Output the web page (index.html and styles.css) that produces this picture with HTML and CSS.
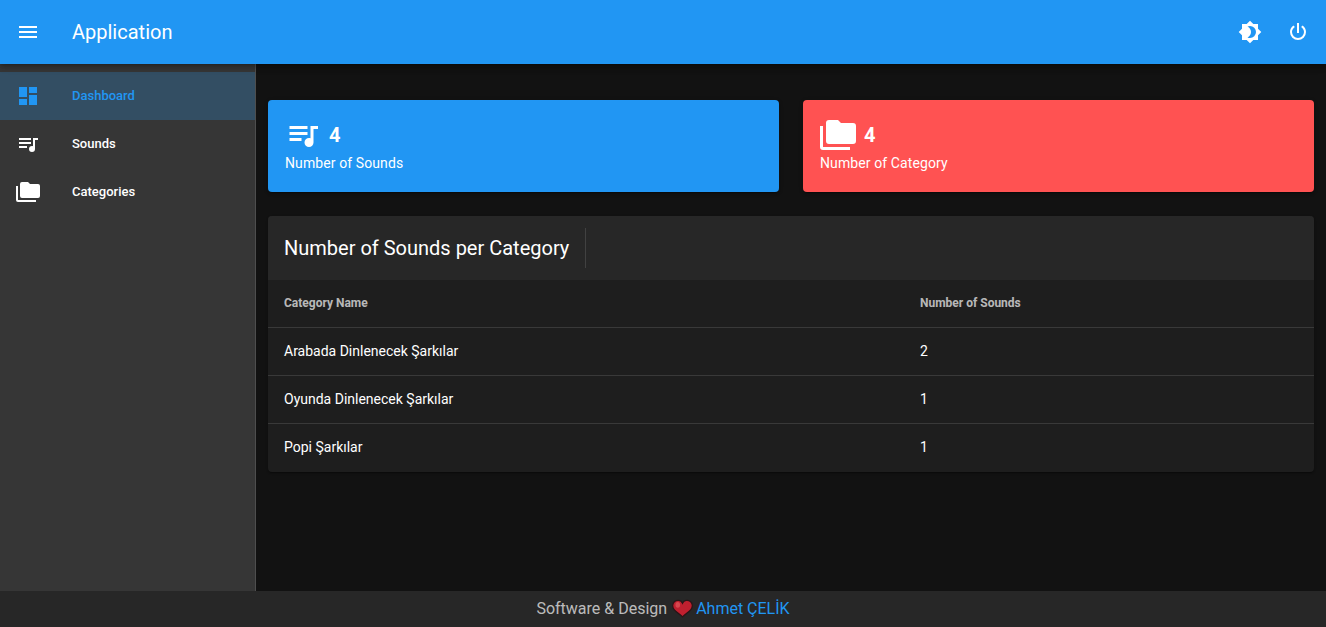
FILE: index.html
```html
<!DOCTYPE html>
<html lang="en">
<head>
    <meta charset="UTF-8">
    <meta name="viewport" content="width=device-width, initial-scale=1.0">
    <title>Application</title>
    <link rel="stylesheet" href="styles.css">
</head>
<body>
    <header class="app-bar">
        <button class="icon-btn nav-toggle">
            <svg class="icon" viewBox="0 0 24 24"><path d="M3,6H21V8H3V6M3,11H21V13H3V11M3,16H21V18H3V16Z"/></svg>
        </button>
        <div class="app-title">Application</div>
        <div class="spacer"></div>
        <button class="icon-btn">
            <svg class="icon" viewBox="0 0 24 24"><path d="M12,18C11.11,18 10.26,17.8 9.5,17.45C11.56,16.5 13,14.42 13,12C13,9.58 11.56,7.5 9.5,6.55C10.26,6.2 11.11,6 12,6A6,6 0 0,1 18,12A6,6 0 0,1 12,18M20,8.69V4H15.31L12,0.69L8.69,4H4V8.69L0.69,12L4,15.31V20H8.69L12,23.31L15.31,20H20V15.31L23.31,12L20,8.69Z"/></svg>
        </button>
        <button class="icon-btn">
            <svg class="icon" viewBox="0 0 24 24"><path d="M16.56,5.44L15.11,6.89C16.84,7.94 18,9.83 18,12A6,6 0 0,1 12,18A6,6 0 0,1 6,12C6,9.83 7.16,7.94 8.88,6.88L7.44,5.44C5.36,6.88 4,9.28 4,12A8,8 0 0,0 12,20A8,8 0 0,0 20,12C20,9.28 18.64,6.88 16.56,5.44M13,3H11V13H13"/></svg>
        </button>
    </header>

    <div class="layout">
        <nav class="sidebar">
            <a class="nav-item active">
                <svg class="icon" viewBox="0 0 24 24"><path d="M13,3V9H21V3M13,21H21V11H13M3,21H11V15H3M3,13H11V3H3V13Z"/></svg>
                <span class="nav-label">Dashboard</span>
            </a>
            <a class="nav-item">
                <svg class="icon" viewBox="0 0 24 24"><path d="M15,6V8H3V6H15M15,10V12H3V10H15M3,16V14H11V16H3M17,6H22V8H19V17A3,3 0 0,1 16,20A3,3 0 0,1 13,17A3,3 0 0,1 16,14C16.35,14 16.69,14.07 17,14.18V6Z"/></svg>
                <span class="nav-label">Sounds</span>
            </a>
            <a class="nav-item">
                <svg class="icon" viewBox="0 0 24 24"><path d="M22,4H14L12,2H6A2,2 0 0,0 4,4V16A2,2 0 0,0 6,18H22A2,2 0 0,0 24,16V6A2,2 0 0,0 22,4M2,6H0V20A2,2 0 0,0 2,22H20V20H2V6Z"/></svg>
                <span class="nav-label">Categories</span>
            </a>
        </nav>

        <main class="content">
            <div class="stats">
                <div class="stat-card blue">
                    <div class="stat-top">
                        <svg class="icon-lg" viewBox="0 0 24 24"><path d="M15,6V8H3V6H15M15,10V12H3V10H15M3,16V14H11V16H3M17,6H22V8H19V17A3,3 0 0,1 16,20A3,3 0 0,1 13,17A3,3 0 0,1 16,14C16.35,14 16.69,14.07 17,14.18V6Z"/></svg>
                        <span class="stat-value">4</span>
                    </div>
                    <div class="stat-label">Number of Sounds</div>
                </div>
                <div class="stat-card red">
                    <div class="stat-top">
                        <svg class="icon-lg" viewBox="0 0 24 24"><path d="M22,4H14L12,2H6A2,2 0 0,0 4,4V16A2,2 0 0,0 6,18H22A2,2 0 0,0 24,16V6A2,2 0 0,0 22,4M2,6H0V20A2,2 0 0,0 2,22H20V20H2V6Z"/></svg>
                        <span class="stat-value">4</span>
                    </div>
                    <div class="stat-label">Number of Category</div>
                </div>
            </div>

            <section class="table-card">
                <div class="toolbar">
                    <div class="toolbar-title">Number of Sounds per Category</div>
                    <div class="divider"></div>
                </div>
                <table>
                    <thead>
                        <tr>
                            <th>Category Name</th>
                            <th>Number of Sounds</th>
                        </tr>
                    </thead>
                    <tbody>
                        <tr>
                            <td>Arabada Dinlenecek Şarkılar</td>
                            <td>2</td>
                        </tr>
                        <tr>
                            <td>Oyunda Dinlenecek Şarkılar</td>
                            <td>1</td>
                        </tr>
                        <tr>
                            <td>Popi Şarkılar</td>
                            <td>1</td>
                        </tr>
                    </tbody>
                </table>
            </section>
        </main>
    </div>

    <footer class="footer">
        <span>Software &amp; Design</span>
        <svg class="heart" viewBox="0 0 20 18">
            <path d="M10,17 C7,14 4,12.5 2,10 C0,7.5 0.3,4 2.5,2.3 C5,0.5 8.5,1 10,4 C11.5,1 15,0.5 17.5,2.3 C19.7,4 20,7.5 18,10 C16,12.5 13,14 10,17 Z"/>
            <ellipse class="heart-shine" cx="5.5" cy="5.5" rx="2.2" ry="2.8"/>
        </svg>
        <a class="author">Ahmet ÇELİK</a>
    </footer>
</body>
</html>
```

FILE: styles.css
```css
* {
    box-sizing: border-box;
}
html, body {
    height: 100%;
}
body {
    margin: 0;
    display: flex;
    flex-direction: column;
    overflow: hidden;
    font-family: Roboto, sans-serif;
    font-size: 14px;
    color: #fff;
    background-color: #121212;
}
.icon {
    width: 24px;
    height: 24px;
    flex: none;
    fill: currentColor;
}
.icon-lg {
    width: 36px;
    height: 36px;
    flex: none;
    fill: currentColor;
}

/* top bar */
.app-bar {
    position: relative;
    z-index: 2;
    height: 64px;
    flex: none;
    display: flex;
    align-items: center;
    padding: 0 4px;
    background-color: #2196f3;
    box-shadow: 0 2px 4px -1px rgba(0,0,0,0.2), 0 4px 5px 0 rgba(0,0,0,0.14), 0 1px 10px 0 rgba(0,0,0,0.12);
}
.icon-btn {
    width: 48px;
    height: 48px;
    padding: 0;
    display: flex;
    align-items: center;
    justify-content: center;
    border: none;
    color: #fff;
    background: none;
}
.app-title {
    margin-left: 20px;
    font-size: 20px;
    font-weight: 400;
}
.spacer {
    flex: 1;
}

/* sidebar */
.layout {
    flex: 1;
    min-height: 0;
    display: flex;
}
.sidebar {
    width: 256px;
    flex: none;
    padding-top: 8px;
    background-color: #363636;
    border-right: 1px solid rgba(255,255,255,0.12);
}
.nav-item {
    height: 48px;
    display: flex;
    align-items: center;
    padding: 0 16px;
    color: #fff;
}
.nav-item.active {
    color: #2196f3;
    background-color: #334e63;
}
.nav-label {
    margin-left: 32px;
    margin-bottom: 2px;
    font-size: 13px;
    font-weight: 500;
}

/* main area */
.content {
    flex: 1;
    min-width: 0;
    padding: 36px 12px 12px;
}
.stats {
    display: flex;
    gap: 24px;
    margin-bottom: 24px;
}
.stat-card {
    flex: 1;
    height: 92px;
    padding: 17px 17px 0;
    border-radius: 4px;
    box-shadow: 0 3px 1px -2px rgba(0,0,0,0.2), 0 2px 2px 0 rgba(0,0,0,0.14), 0 1px 5px 0 rgba(0,0,0,0.12);
}
.stat-card.blue {
    background-color: #2196f3;
}
.stat-card.red {
    background-color: #ff5252;
}
.stat-top {
    display: flex;
    align-items: center;
    gap: 8px;
}
.stat-value {
    font-size: 20px;
    font-weight: 700;
}
.stat-label {
    line-height: 20px;
    letter-spacing: 0.1px;
}

/* table card */
.table-card {
    background-color: #1e1e1e;
    border-radius: 4px;
    overflow: hidden;
    box-shadow: 0 2px 1px -1px rgba(0,0,0,0.2), 0 1px 1px 0 rgba(0,0,0,0.14), 0 1px 3px 0 rgba(0,0,0,0.12);
}
.toolbar {
    height: 64px;
    display: flex;
    align-items: center;
    padding: 0 16px;
    background-color: #272727;
}
.toolbar-title {
    font-size: 20px;
    font-weight: 400;
}
.divider {
    width: 1px;
    height: 40px;
    margin-left: 16px;
    background-color: rgba(255,255,255,0.12);
}
table {
    width: 100%;
    border-spacing: 0;
}
th, td {
    height: 48px;
    padding: 0 16px 2px;
    text-align: left;
    border-bottom: 1px solid rgba(255,255,255,0.12);
}
th {
    font-size: 12px;
    font-weight: 700;
    color: rgba(255,255,255,0.7);
}
th:first-child {
    width: 636px;
}
tbody tr:last-child td {
    padding-bottom: 3px;
    border-bottom: none;
}

/* footer */
.footer {
    height: 36px;
    flex: none;
    display: flex;
    align-items: center;
    justify-content: center;
    padding-bottom: 2px;
    font-size: 16px;
    color: rgba(255,255,255,0.7);
    background-color: #272727;
}
.heart {
    width: 21px;
    height: 19px;
    margin: 0 3px 0 5px;
    fill: #c0202f;
    stroke: #2a1517;
    stroke-width: 1.2;
}
.heart .heart-shine {
    fill: #d8474f;
    stroke: none;
}
.author {
    color: #2196f3;
}
```
